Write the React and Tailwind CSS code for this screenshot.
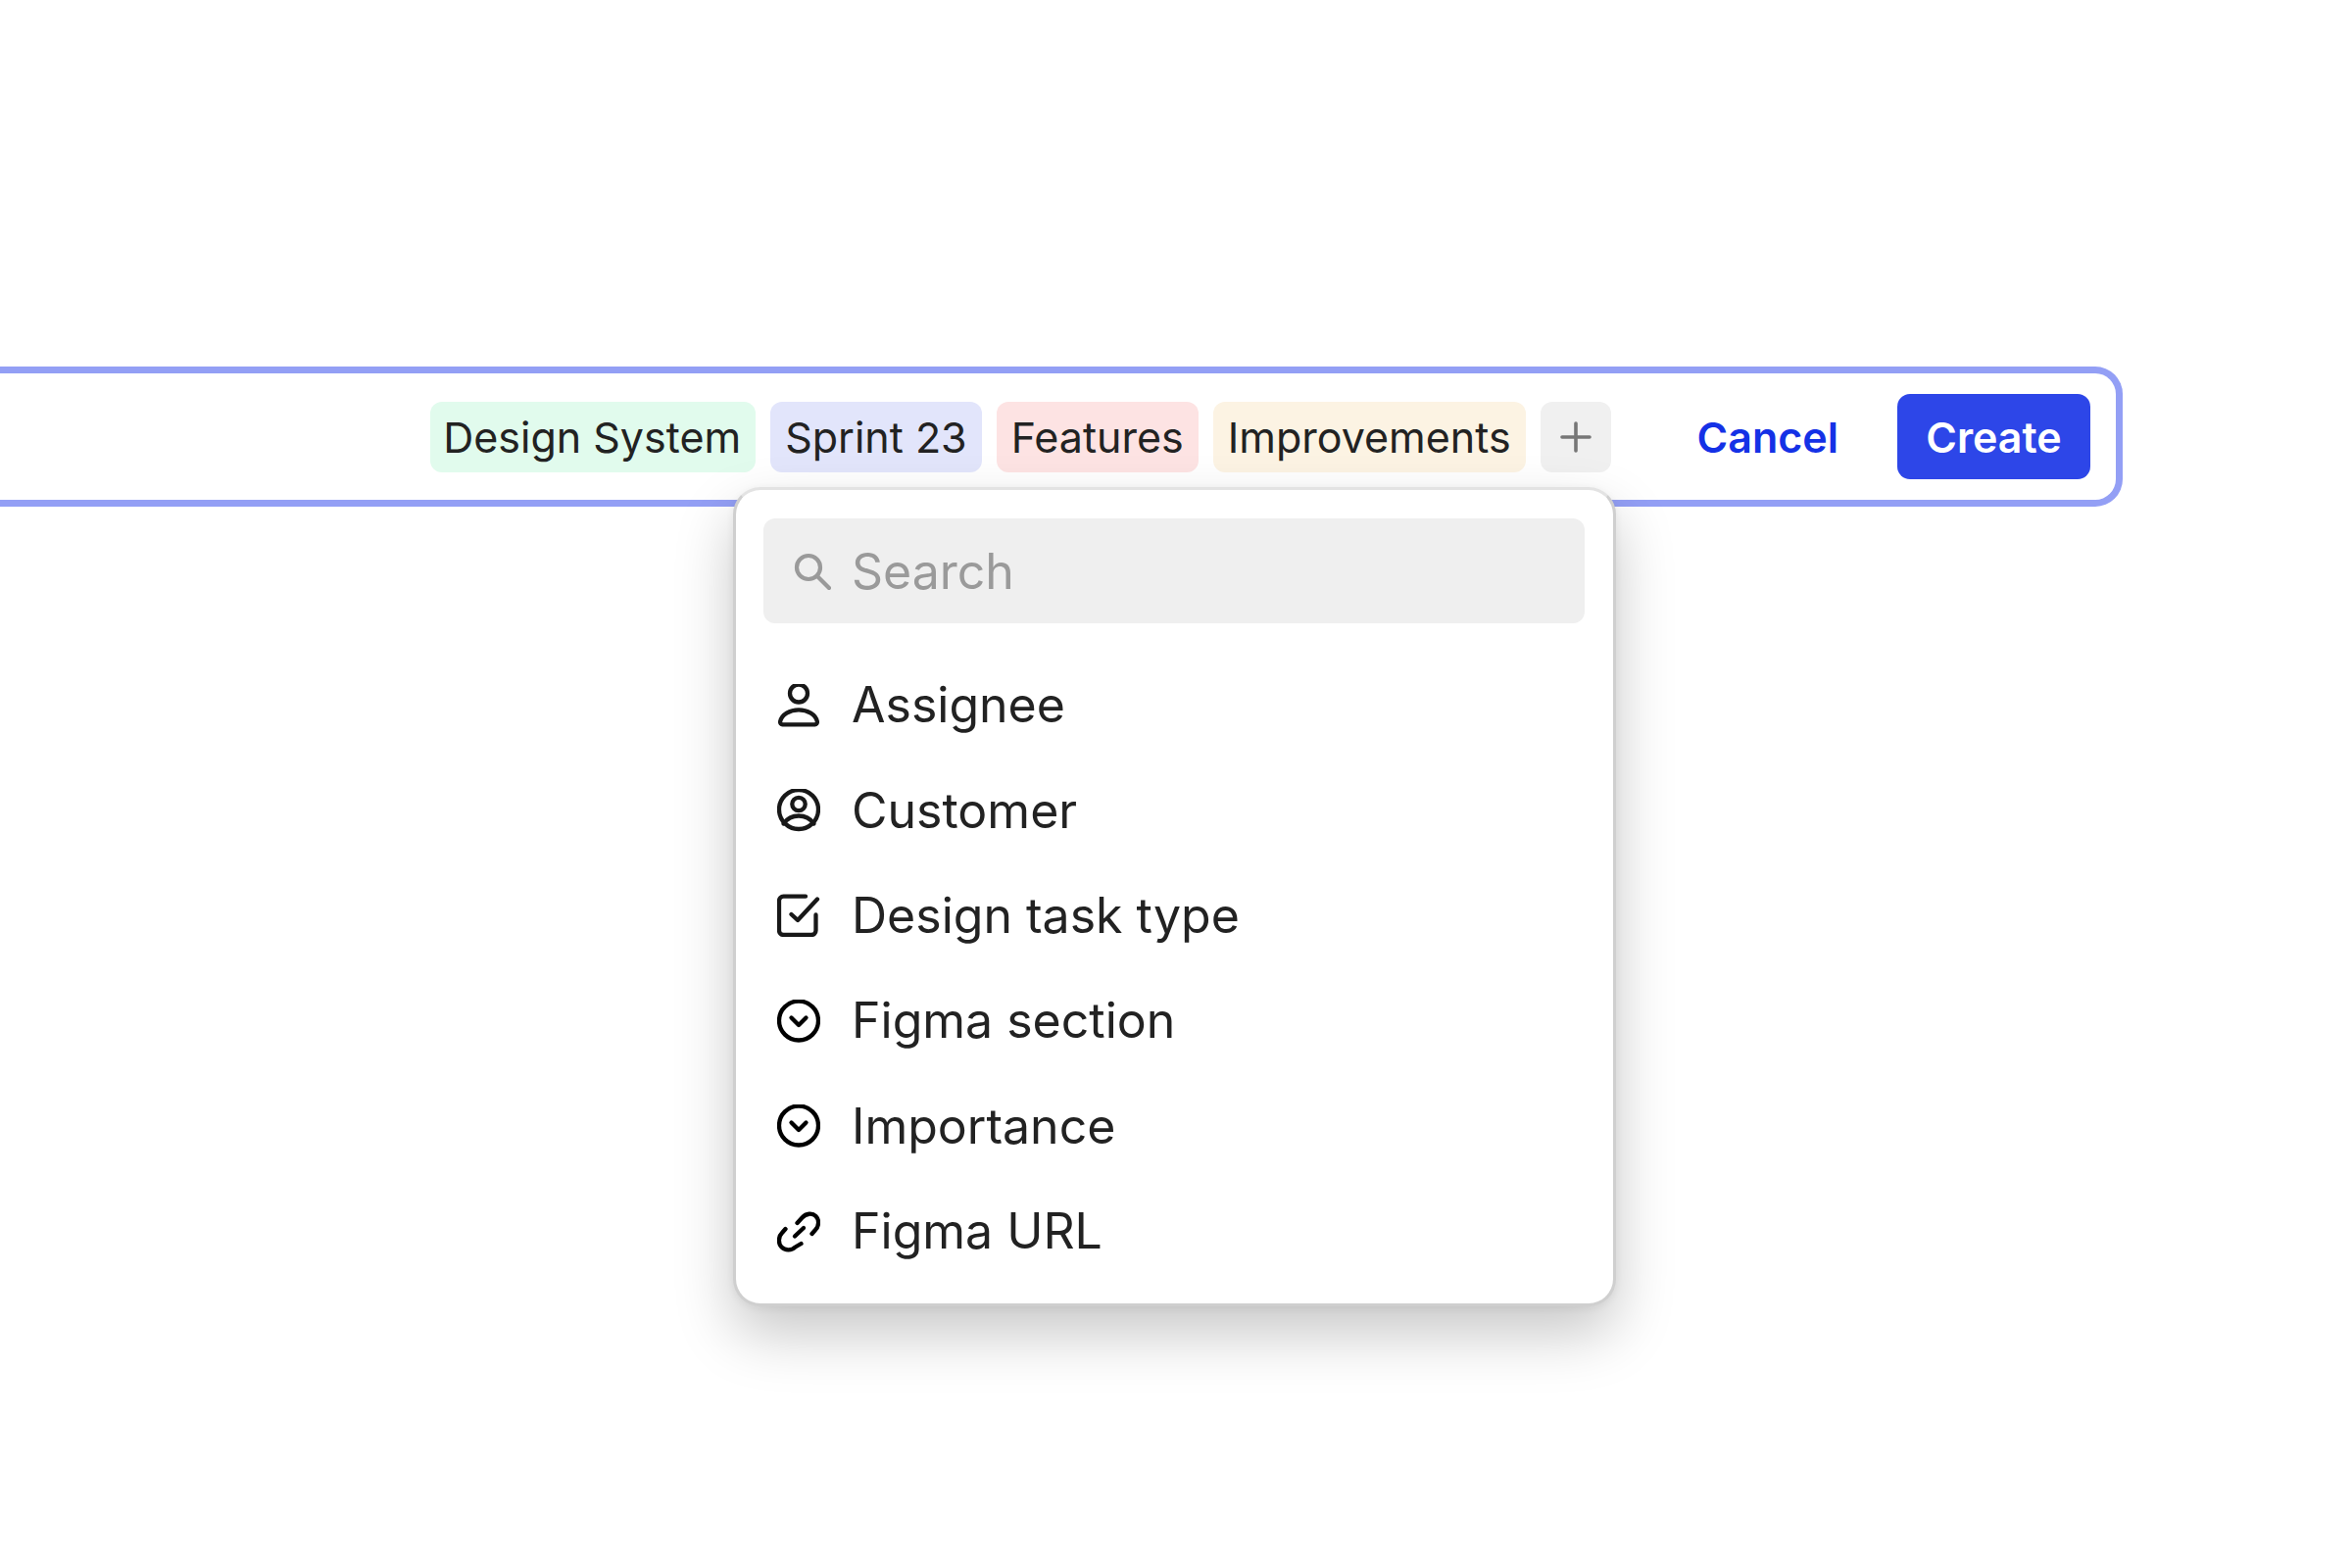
import React from "react";

const tags = [
  { label: "Design System", color: "bg-[#e1fbed] pl-[13px] pr-[15px]" },
  { label: "Sprint 23", color: "bg-[#e2e5fb] px-[15px]" },
  { label: "Features", color: "bg-[#fde3e3] px-[15px]" },
  { label: "Improvements", color: "bg-[#fcf3e3] px-[15px]" },
];

// All icons are drawn on a 44px box to match the menu rows
function Icon({ children, className = "" }) {
  return (
    <svg
      viewBox="0 0 44 44"
      fill="none"
      stroke="currentColor"
      strokeWidth="4.3"
      strokeLinecap="round"
      strokeLinejoin="round"
      className={"w-[44px] h-[44px] shrink-0 " + className}
    >
      {children}
    </svg>
  );
}

const PersonIcon = () => (
  <Icon>
    <circle cx="22" cy="9.5" r="9" />
    <path d="M5.5 41.3h33a2.5 2.5 0 0 0 2.4-2.9C39.5 31 31 26.4 22 26.4S4.5 31 3.1 38.4a2.5 2.5 0 0 0 2.4 2.9z" />
  </Icon>
);

const CustomerIcon = () => (
  <Icon>
    <circle cx="22" cy="21" r="20" />
    <circle cx="22" cy="15.5" r="6.7" />
    <path d="M6.5 35.5C10 30.5 16 27.5 22 27.5S34 30.5 37.5 35.5" />
  </Icon>
);

const CheckIcon = () => (
  <Icon>
    <path d="M29 2.7H6.5a4.5 4.5 0 0 0-4.5 4.5v30.3a4.5 4.5 0 0 0 4.5 4.5h28.5a4.5 4.5 0 0 0 4.5-4.5V21.5" />
    <path d="M14.5 21l6.5 6 20-21.5" />
  </Icon>
);

const ChevronIcon = () => (
  <Icon>
    <circle cx="22" cy="21.5" r="20" />
    <path d="M14.5 18.5l7.5 7.5 7.5-7.5" />
  </Icon>
);

const LinkIcon = () => (
  <Icon>
    <path d="M20.5 13l5-5.5c4-4.5 10.5-5 14-1.5s3.5 10-.5 14l-3.5 4" />
    <path d="M8.5 19l-3.5 4c-4 4-4 11-.5 14.5s10 4 14 0l6-3.5" />
    <path d="M18 26.5l9-8.5" />
  </Icon>
);

const fields = [
  { label: "Assignee", icon: <PersonIcon />, color: "text-[#181818]" },
  { label: "Customer", icon: <CustomerIcon />, color: "text-[#181818]" },
  { label: "Design task type", icon: <CheckIcon />, color: "text-[#181818]" },
  { label: "Figma section", icon: <ChevronIcon />, color: "text-black" },
  { label: "Importance", icon: <ChevronIcon />, color: "text-black" },
  { label: "Figma URL", icon: <LinkIcon />, color: "text-black" },
];

export default function App() {
  return (
    <div className="h-[1600px] bg-white pt-[374px] overflow-hidden font-['Inter',sans-serif]">
      <div className="relative w-[2166px] h-[143px] flex items-center justify-end border-[7px] border-l-0 rounded-r-[28px] border-[#939ff5] pr-[26px]">
        <div className="flex items-center gap-[15px]">
          {tags.map((tag) => (
            <span
              key={tag.label}
              className={"h-[72px] flex items-center pt-[1px] rounded-[12px] text-[43px] text-[#222222] whitespace-nowrap " + tag.color}
            >
              {tag.label}
            </span>
          ))}
          <span className="w-[72px] h-[72px] flex items-center justify-center rounded-[12px] bg-[#f0f0f0]">
            <svg viewBox="0 0 32 32" className="w-[32px] h-[32px]" stroke="#777777" strokeWidth="3.6" strokeLinecap="round" fill="none">
              <path d="M16 2v28M2 16h28" />
            </svg>
          </span>
        </div>
        <button className="ml-[88px] pt-[1px] text-[43px] font-semibold text-[#1431e6]">Cancel</button>
        <button className="ml-[60px] w-[197px] h-[87px] pt-[1px] rounded-[13px] bg-[#2d46e8] text-white text-[43px] font-semibold">
          Create
        </button>

        <div className="absolute left-[748px] top-[116px] w-[901px] h-[836px] rounded-[28px] bg-white border-[3px] border-[#e3e3e3] border-b-[#cfcfcf] border-x-[#cfcfcf] shadow-[0_28px_60px_rgba(0,0,0,0.22),0_2px_8px_rgba(0,0,0,0.06)] pl-[28px] pr-[29px] pt-[29px]">
          <div className="h-[107px] rounded-[12px] bg-[#efefef] flex items-center pl-[31px] gap-[21px]">
            <svg viewBox="0 0 38 38" className="w-[38px] h-[38px]" fill="none" stroke="#9a9a9a" strokeWidth="4.2" strokeLinecap="round">
              <circle cx="15" cy="15" r="12" />
              <path d="M24 24l12 12" />
            </svg>
            <span className="pt-[2px] text-[50px] text-[#9a9a9a]">Search</span>
          </div>
          <div className="mt-[30px] flex flex-col">
            {fields.map((field) => (
              <div key={field.label} className="h-[107.4px] flex items-center pl-[14px] gap-[32px]">
                <span className={field.color}>{field.icon}</span>
                <span className="text-[50px] text-[#222222] whitespace-nowrap">{field.label}</span>
              </div>
            ))}
          </div>
        </div>
      </div>
    </div>
  );
}
